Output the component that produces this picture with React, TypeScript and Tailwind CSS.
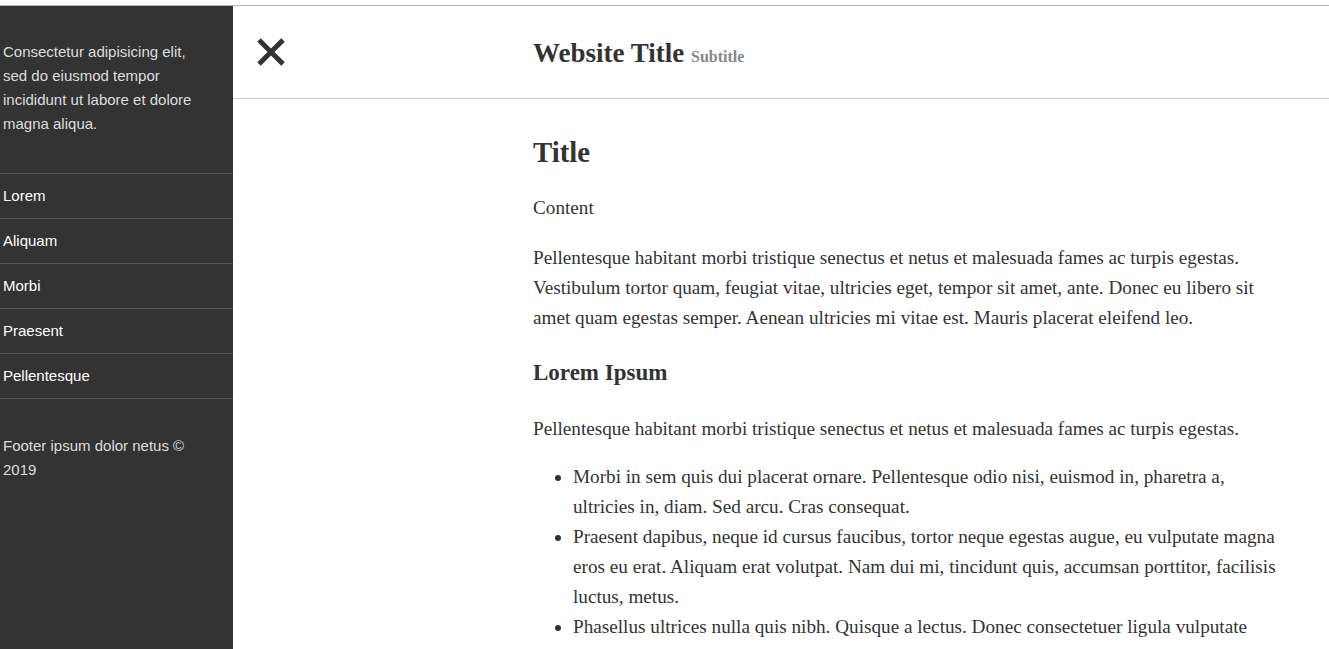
import React from 'react';

const navItems = ['Lorem', 'Aliquam', 'Morbi', 'Praesent', 'Pellentesque'];

const listItems = [
  'Morbi in sem quis dui placerat ornare. Pellentesque odio nisi, euismod in, pharetra a, ultricies in, diam. Sed arcu. Cras consequat.',
  'Praesent dapibus, neque id cursus faucibus, tortor neque egestas augue, eu vulputate magna eros eu erat. Aliquam erat volutpat. Nam dui mi, tincidunt quis, accumsan porttitor, facilisis luctus, metus.',
  'Phasellus ultrices nulla quis nibh. Quisque a lectus. Donec consectetuer ligula vulputate rutrum. Morbi ut tortor quis tellus elementum.',
];

const Sidebar: React.FC = () => (
  <aside className="w-[233px] shrink-0 bg-[#333333] text-[15px] leading-6 font-['Liberation_Sans',Arial,sans-serif]">
    <p className="pt-[34px] pb-[37px] pl-[3px] pr-[30px] text-[#dddddd]">
      Consectetur adipisicing elit, sed do eiusmod tempor incididunt ut labore et dolore magna aliqua.
    </p>
    <nav className="border-t border-[#555555]">
      {navItems.map((item) => (
        <a
          key={item}
          href="#"
          className="block h-[45px] border-b border-[#555555] pl-[3px] leading-[44px] text-white"
        >
          {item}
        </a>
      ))}
    </nav>
    <p className="pt-[35px] pl-[3px] pr-[30px] text-[#dddddd]">Footer ipsum dolor netus © 2019</p>
  </aside>
);

export default function App() {
  return (
    <div className="flex h-screen flex-col overflow-hidden bg-white font-['Liberation_Serif','Times_New_Roman',serif] text-[#333333]">
      <div className="h-[6px] shrink-0 border-b border-[#b5b5b5] bg-white" />
      <div className="flex min-h-0 flex-1">
        <Sidebar />
        <main className="flex-1">
          <header className="flex h-[93px] items-center border-b border-[#cccccc]">
            <button className="ml-[23px] mr-[237px] flex h-[40px] w-[40px] items-center" aria-label="Close">
              <svg width="30" height="30" viewBox="0 0 30 30">
                <path d="M3 3 L27 27 M27 3 L3 27" stroke="#333333" strokeWidth="5" fill="none" />
              </svg>
            </button>
            <h1 className="pt-[3px] text-[27px] font-bold">
              Website Title <small className="text-[16px] text-[#888888]">Subtitle</small>
            </h1>
          </header>
          <article className="ml-[300px] w-[752px] text-[19.2px] leading-[30px]">
            <h2 className="mt-[35px] text-[28.8px] font-bold leading-[36px]">Title</h2>
            <p className="mt-[23px]">Content</p>
            <p className="mt-[20px]">
              Pellentesque habitant morbi tristique senectus et netus et malesuada fames ac turpis egestas.
              Vestibulum tortor quam, feugiat vitae, ultricies eget, tempor sit amet, ante. Donec eu libero sit
              amet quam egestas semper. Aenean ultricies mi vitae est. Mauris placerat eleifend leo.
            </p>
            <h3 className="mt-[25px] text-[23px] font-bold">Lorem Ipsum</h3>
            <p className="mt-[26px]">
              Pellentesque habitant morbi tristique senectus et netus et malesuada fames ac turpis egestas.
            </p>
            <ul className="mt-[18px] list-disc pl-10">
              {listItems.map((item) => (
                <li key={item}>{item}</li>
              ))}
            </ul>
          </article>
        </main>
      </div>
    </div>
  );
}
